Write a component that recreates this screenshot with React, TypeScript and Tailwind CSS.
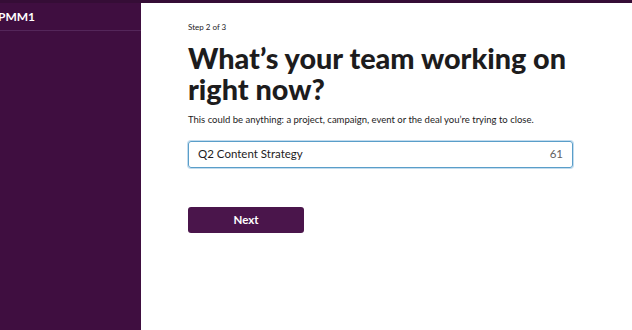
import React from "react";

export default function App() {
  return (
    <div className="w-[632px] h-[330px] bg-white flex flex-col overflow-hidden" style={{ fontFamily: "Lato, 'Liberation Sans', sans-serif" }}>
      <div className="h-[3px] bg-[#350d36] shrink-0" />
      <div className="flex flex-1 min-h-0">
        <aside className="w-[141px] shrink-0 bg-[#3f0e40] flex flex-col">
          <div className="h-[28px] border-b border-[#54265a] flex items-center -ml-[2px]">
            <span className="text-white font-bold text-[12px] leading-none">PMM1</span>
          </div>
        </aside>
        <main className="flex-1 pl-[47px] pt-[20px]">
          <div className="text-[8px] text-[#1d1c1d] leading-none">Step 2 of 3</div>
          <h1 className="mt-[12px] text-[28.8px] font-black text-[#1d1c1d] leading-[31px] w-[400px]">
            What’s your team working on right now?
          </h1>
          <p className="mt-[10px] text-[9.5px] text-[#1d1c1d] leading-none">
            This could be anything: a project, campaign, event or the deal you’re trying to close.
          </p>
          <div className="mt-[16px] w-[385px] h-[27px] border border-[#5a9ec9] rounded-[3px] shadow-[0_0_0_1px_#c3dcee] flex items-center justify-between px-[9px] text-[11.5px] text-[#1d1c1d]">
            <span>Q2 Content Strategy</span>
            <span className="text-[#616061]">61</span>
          </div>
          <button className="mt-[39px] w-[116px] h-[26px] bg-[#4a154b] rounded-[3px] text-white font-bold text-[11.5px]">
            Next
          </button>
        </main>
      </div>
    </div>
  );
}
